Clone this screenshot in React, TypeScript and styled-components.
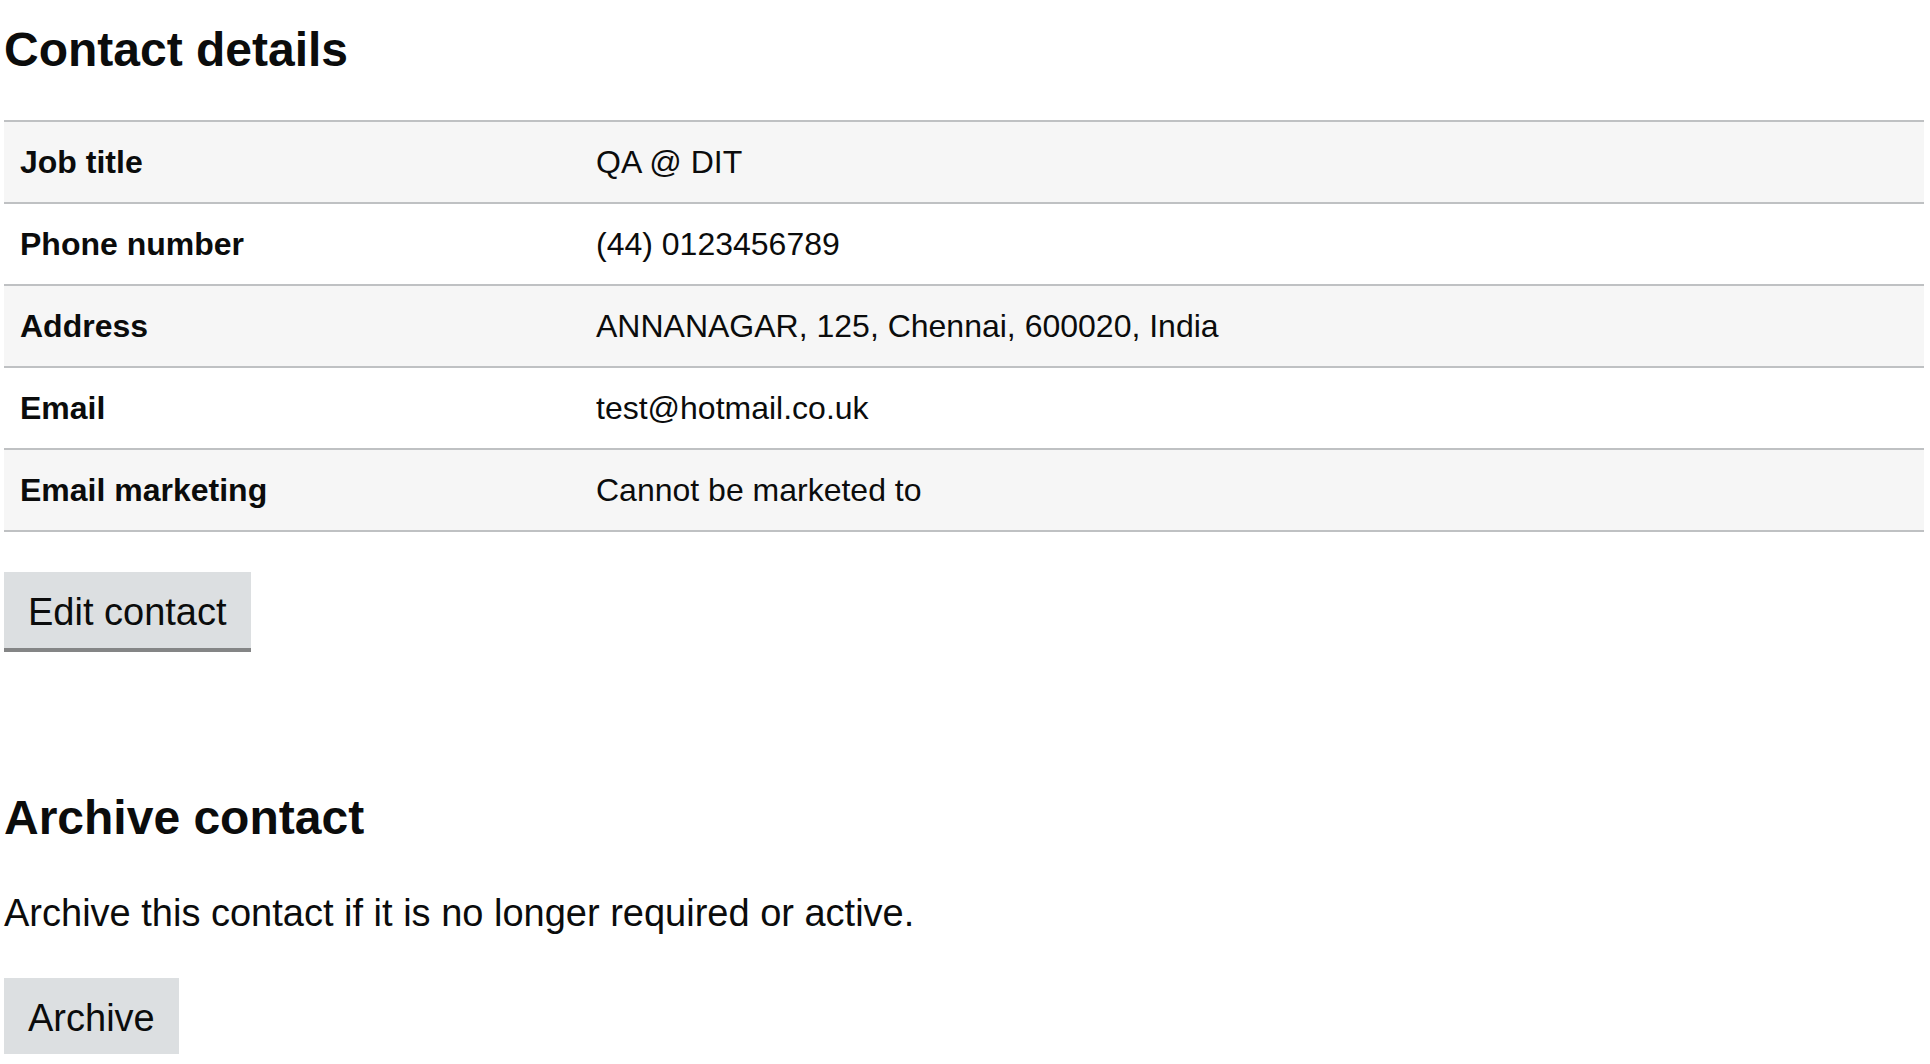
import React from "react";
import styled, { createGlobalStyle } from "styled-components";

const GlobalStyle = createGlobalStyle`
  html, body {
    margin: 0;
    padding: 0;
    background: #ffffff;
  }
  body {
    font-family: "Liberation Sans", Arial, sans-serif;
    color: #0b0c0c;
  }
`;

const Page = styled.main`
  width: 1920px;
  padding: 20px 6px 0 4px;
`;

const Section = styled.section<{ $spaceAfter?: number }>`
  margin-bottom: ${(p) => p.$spaceAfter ?? 0}px;
`;

const Heading = styled.h2`
  margin: 0 0 40px;
  font-size: 48px;
  line-height: 60px;
  font-weight: 700;
  color: #0b0c0c;
`;

const Table = styled.table`
  width: 100%;
  border-collapse: collapse;
  border-top: 2px solid #bfc1c3;
  margin: 0 0 40px;
  table-layout: fixed;
`;

const LabelColumn = styled.col`
  width: 576px;
`;

const Row = styled.tr<{ $striped: boolean }>`
  background: ${(p) => (p.$striped ? "#f6f6f6" : "#ffffff")};
  border-bottom: 2px solid #bfc1c3;
`;

const LabelCell = styled.th`
  padding: 20px 16px;
  text-align: left;
  font-size: 32px;
  line-height: 40px;
  font-weight: 700;
  vertical-align: middle;
`;

const ValueCell = styled.td`
  padding: 20px 16px;
  font-size: 32px;
  line-height: 40px;
  font-weight: 400;
  vertical-align: middle;
`;

const Button = styled.button`
  display: inline-block;
  margin: 0;
  padding: 21px 24px 17px;
  border: none;
  border-radius: 0;
  background: #dcdfe1;
  box-shadow: 0 4px 0 #848586;
  font-family: "Liberation Sans", Arial, sans-serif;
  font-size: 38px;
  line-height: 38px;
  font-weight: 400;
  color: #0b0c0c;
  cursor: pointer;
`;

const Body = styled.p`
  margin: 0 0 40px;
  font-size: 38px;
  line-height: 50px;
  color: #0b0c0c;
`;

const rows = [
  { label: "Job title", value: "QA @ DIT" },
  { label: "Phone number", value: "(44) 0123456789" },
  { label: "Address", value: "ANNANAGAR, 125, Chennai, 600020, India" },
  { label: "Email", value: "test@hotmail.co.uk" },
  { label: "Email marketing", value: "Cannot be marketed to" },
];

export default function App() {
  return (
    <>
      <GlobalStyle />
      <Page>
        <Section $spaceAfter={140}>
          <Heading>Contact details</Heading>
          <Table>
            <colgroup>
              <LabelColumn />
              <col />
            </colgroup>
            <tbody>
              {rows.map((r, i) => (
                <Row key={r.label} $striped={i % 2 === 0}>
                  <LabelCell scope="row">{r.label}</LabelCell>
                  <ValueCell>{r.value}</ValueCell>
                </Row>
              ))}
            </tbody>
          </Table>
          <Button type="button">Edit contact</Button>
        </Section>
        <Section>
          <Heading>Archive contact</Heading>
          <Body>Archive this contact if it is no longer required or active.</Body>
          <Button type="button">Archive</Button>
        </Section>
      </Page>
    </>
  );
}
